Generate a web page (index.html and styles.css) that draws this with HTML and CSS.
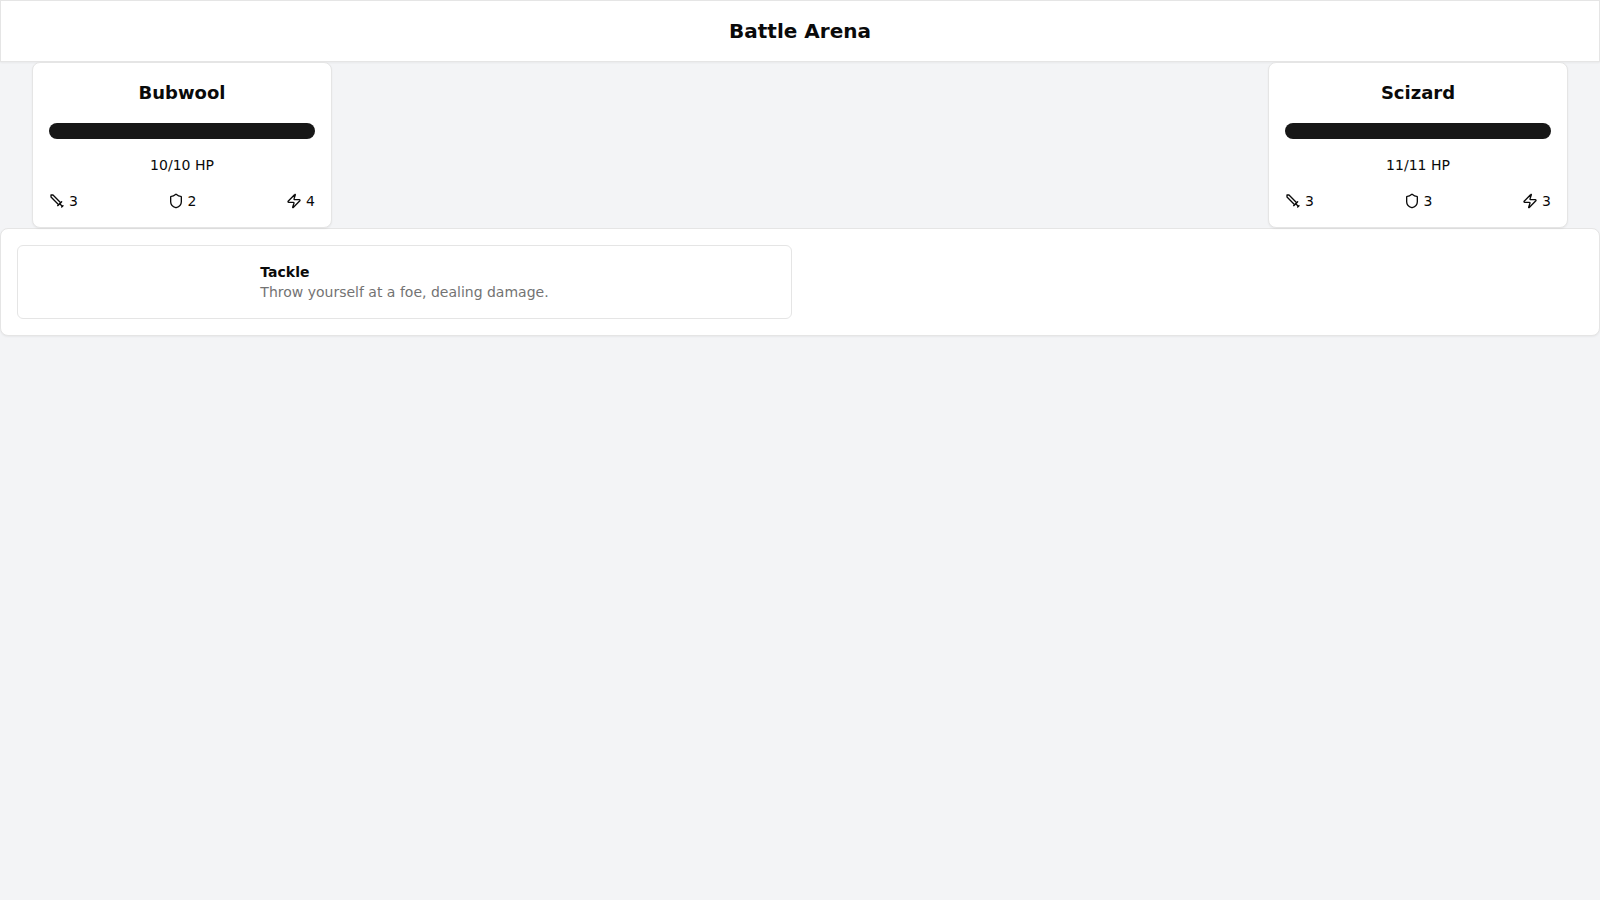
FILE: index.html
```html
<!DOCTYPE html>
<html lang="en">
<head>
<meta charset="utf-8">
<title>Battle Arena</title>
<link rel="stylesheet" href="styles.css">
</head>
<body>
<svg class="sprite" aria-hidden="true">
  <symbol id="sword" viewBox="0 0 24 24"><polyline points="14.5 17.5 3 6 3 3 6 3 17.5 14.5"/><line x1="13" x2="19" y1="19" y2="13"/><line x1="16" x2="20" y1="16" y2="20"/><line x1="19" x2="21" y1="21" y2="19"/></symbol>
  <symbol id="shield" viewBox="0 0 24 24"><path d="M20 13c0 5-3.5 7.5-7.66 8.95a1 1 0 0 1-.67-.01C7.5 20.5 4 18 4 13V6a1 1 0 0 1 1-1c2 0 4.5-1.2 6.24-2.72a1.17 1.17 0 0 1 1.52 0C14.51 3.81 17 5 19 5a1 1 0 0 1 1 1z"/></symbol>
  <symbol id="zap" viewBox="0 0 24 24"><path d="M4 14a1 1 0 0 1-.78-1.63l9.9-10.2a.5.5 0 0 1 .86.46l-1.92 6.02A1 1 0 0 0 13 10h7a1 1 0 0 1 .78 1.63l-9.9 10.2a.5.5 0 0 1-.86-.46l1.92-6.02A1 1 0 0 0 11 14z"/></symbol>
</svg>
<header class="header"><h1 class="header-title">Battle Arena</h1></header>
<main>
  <section class="arena">
    <article class="card">
      <h2 class="name">Bubwool</h2>
      <div class="bar"><div class="bar-fill" style="width: 100%"></div></div>
      <p class="hp">10/10 HP</p>
      <div class="stats">
        <span class="stat"><svg class="icon"><use href="#sword"/></svg><span>3</span></span>
        <span class="stat"><svg class="icon"><use href="#shield"/></svg><span>2</span></span>
        <span class="stat"><svg class="icon"><use href="#zap"/></svg><span>4</span></span>
      </div>
    </article>
    <article class="card">
      <h2 class="name">Scizard</h2>
      <div class="bar"><div class="bar-fill" style="width: 100%"></div></div>
      <p class="hp">11/11 HP</p>
      <div class="stats">
        <span class="stat"><svg class="icon"><use href="#sword"/></svg><span>3</span></span>
        <span class="stat"><svg class="icon"><use href="#shield"/></svg><span>3</span></span>
        <span class="stat"><svg class="icon"><use href="#zap"/></svg><span>3</span></span>
      </div>
    </article>
  </section>
  <section class="moves">
    <button class="move">
      <span class="move-text">
        <span class="move-name">Tackle</span>
        <span class="move-desc">Throw yourself at a foe, dealing damage.</span>
      </span>
    </button>
  </section>
</main>
</body>
</html>
```
FILE: styles.css
```css
* { box-sizing: border-box; margin: 0; padding: 0; }

body {
  min-height: 100vh;
  background: #f3f4f6;
  color: #0a0a0a;
  font-family: "DejaVu Sans", sans-serif;
  font-size: 14px;
  line-height: 20px;
}

.sprite { display: none; }

.header, .card, .moves {
  background: #fff;
  border: 1px solid #e5e5e5;
  box-shadow: 0 1px 2px 0 rgba(0, 0, 0, .05);
  padding: 16px;
}

.header { text-align: center; }
.header-title { font-size: 20px; line-height: 28px; font-weight: 700; }

.arena { display: flex; justify-content: space-between; padding: 0 32px; }

.card {
  width: 300px;
  border-radius: 8px;
  display: flex;
  flex-direction: column;
  gap: 16px;
}

.name { font-size: 18px; line-height: 28px; font-weight: 700; text-align: center; }

.bar { height: 16px; border-radius: 8px; overflow: hidden; background: rgba(23, 23, 23, .2); }
.bar-fill { height: 100%; background: #171717; }

.hp { text-align: center; }

.stats { display: flex; justify-content: space-between; }
.stat { display: flex; align-items: center; gap: 4px; }

.icon {
  width: 16px;
  height: 16px;
  fill: none;
  stroke: currentColor;
  stroke-width: 2;
  stroke-linecap: round;
  stroke-linejoin: round;
}

.moves {
  display: grid;
  grid-template-columns: 1fr 1fr;
  gap: 16px;
  border-radius: 8px;
}

.move {
  display: flex;
  justify-content: center;
  align-items: center;
  padding: 16px;
  border: 1px solid #e5e5e5;
  border-radius: 6px;
  background: #fff;
  color: inherit;
  font: inherit;
}

.move-text { display: flex; flex-direction: column; text-align: left; }
.move-name { font-weight: 700; }
.move-desc { color: #737373; }
```
